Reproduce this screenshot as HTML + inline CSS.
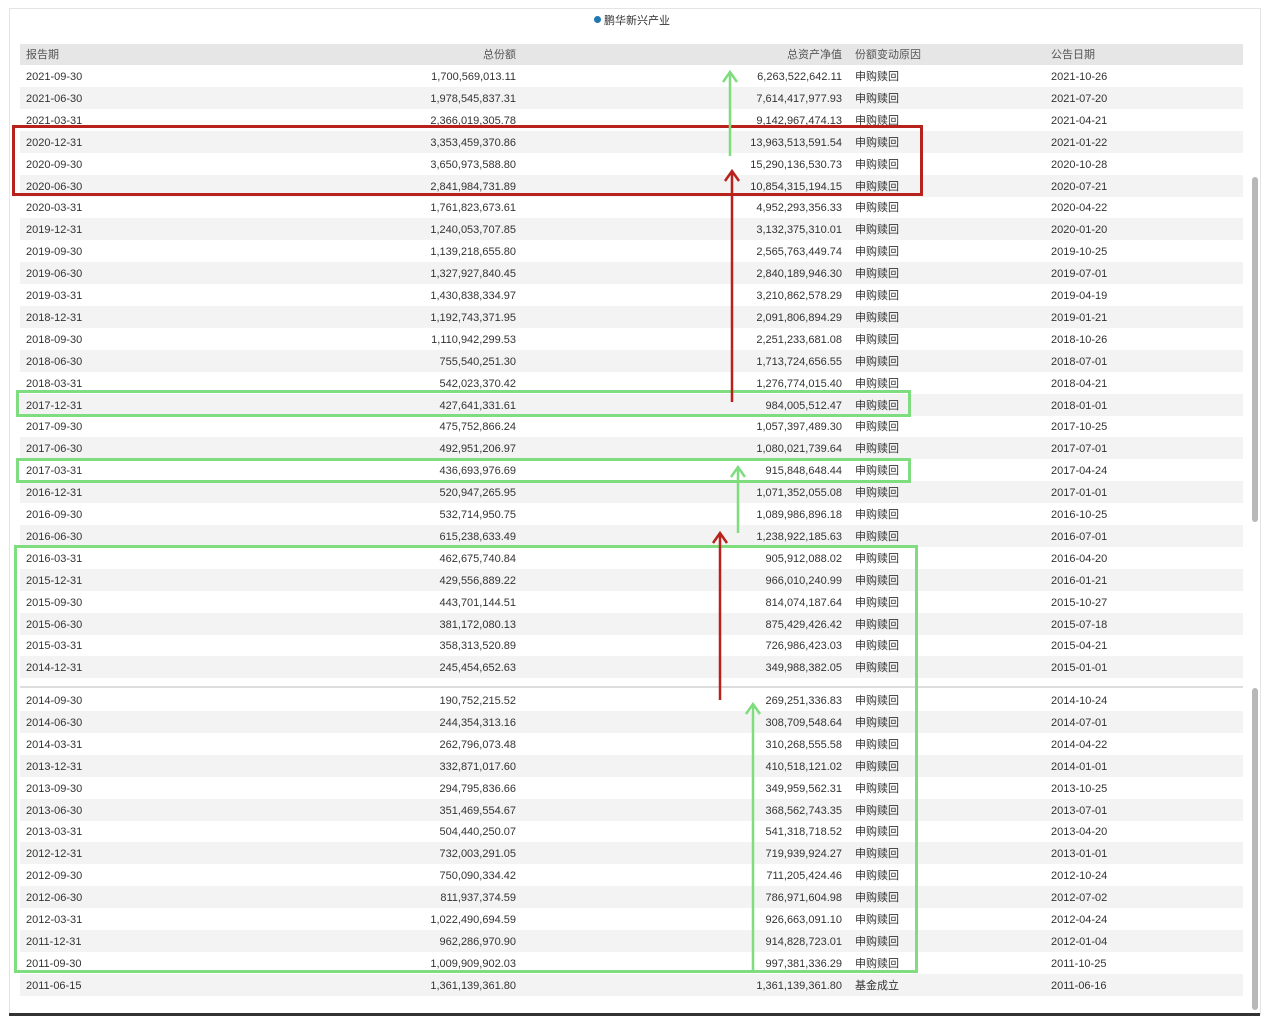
<!DOCTYPE html>
<html><head><meta charset="utf-8"><style>
body{margin:0;width:1267px;height:1025px;background:#fff;position:relative;overflow:hidden;font-family:"Liberation Sans","Noto Sans CJK SC",sans-serif;font-size:11px;color:#333}
.frame{position:absolute;left:9px;top:8px;width:1250px;height:1006px;border:1px solid #e4e4e4;border-bottom:none}
.bot{position:absolute;left:9px;top:1013px;width:1251px;height:3px;background:#333}
.row{position:absolute;left:20px;width:1223px;height:22px;line-height:24px}
.g{background:#f3f3f3}
.h{background:#e6e6e6;color:#555}
.row span{position:absolute;white-space:nowrap}
.c1{left:6px}.c2{right:727px}.c3{right:401px}.c4{left:835px}.c5{left:1031px}
.sb{position:absolute;left:1252px;width:6px;background:#b8b8b8;border-radius:3px}
</style></head><body>
<div class="frame"></div>
<div style="position:absolute;left:594px;top:14px;line-height:14px;font-size:11px;color:#333"><span style="display:inline-block;width:7px;height:7px;border-radius:50%;background:#1f77b4;margin-right:3px;vertical-align:1px"></span>鹏华新兴产业</div>
<div class="row h" style="top:44px;height:21px;line-height:22px"><span class="c1">报告期</span><span class="c2">总份额</span><span class="c3">总资产净值</span><span class="c4">份额变动原因</span><span class="c5">公告日期</span></div>
<div id="t"></div>
<div style="position:absolute;left:20px;top:678px;width:1223px;height:10px;background:#fff"></div>
<div style="position:absolute;left:20px;top:686px;width:1223px;height:2px;background:#ddd"></div>
<div class="sb" style="top:177px;height:345px"></div>
<div class="sb" style="top:688px;height:322px"></div>
<div class="bot"></div>
<svg width="1267" height="1025" style="position:absolute;left:0;top:0">
<g fill="none" stroke-width="3">
<rect x="13.5" y="126.5" width="908" height="68" stroke="#b8221c"/>
<rect x="17.5" y="391.5" width="892" height="24" stroke="#7fdc7f"/>
<rect x="17.5" y="459.5" width="892" height="22" stroke="#7fdc7f"/>
<rect x="15.5" y="546.5" width="901" height="425" stroke="#7fdc7f"/>
</g>
<g stroke-width="2.5" fill="none">
<path d="M730 156V72M723 82L730 72L737 82" stroke="#7fdc7f"/>
<path d="M732 402V171M725 181L732 171L739 181" stroke="#b8221c"/>
<path d="M738 533V467M731 477L738 467L745 477" stroke="#7fdc7f"/>
<path d="M720 700V533M713 543L720 533L727 543" stroke="#b8221c"/>
<path d="M753 972V704M746 714L753 704L760 714" stroke="#7fdc7f"/>
</g>
</svg>
<script>
var a=`2021-09-30|1,700,569,013.11|6,263,522,642.11|2021-10-26
2021-06-30|1,978,545,837.31|7,614,417,977.93|2021-07-20
2021-03-31|2,366,019,305.78|9,142,967,474.13|2021-04-21
2020-12-31|3,353,459,370.86|13,963,513,591.54|2021-01-22
2020-09-30|3,650,973,588.80|15,290,136,530.73|2020-10-28
2020-06-30|2,841,984,731.89|10,854,315,194.15|2020-07-21
2020-03-31|1,761,823,673.61|4,952,293,356.33|2020-04-22
2019-12-31|1,240,053,707.85|3,132,375,310.01|2020-01-20
2019-09-30|1,139,218,655.80|2,565,763,449.74|2019-10-25
2019-06-30|1,327,927,840.45|2,840,189,946.30|2019-07-01
2019-03-31|1,430,838,334.97|3,210,862,578.29|2019-04-19
2018-12-31|1,192,743,371.95|2,091,806,894.29|2019-01-21
2018-09-30|1,110,942,299.53|2,251,233,681.08|2018-10-26
2018-06-30|755,540,251.30|1,713,724,656.55|2018-07-01
2018-03-31|542,023,370.42|1,276,774,015.40|2018-04-21
2017-12-31|427,641,331.61|984,005,512.47|2018-01-01
2017-09-30|475,752,866.24|1,057,397,489.30|2017-10-25
2017-06-30|492,951,206.97|1,080,021,739.64|2017-07-01
2017-03-31|436,693,976.69|915,848,648.44|2017-04-24
2016-12-31|520,947,265.95|1,071,352,055.08|2017-01-01
2016-09-30|532,714,950.75|1,089,986,896.18|2016-10-25
2016-06-30|615,238,633.49|1,238,922,185.63|2016-07-01
2016-03-31|462,675,740.84|905,912,088.02|2016-04-20
2015-12-31|429,556,889.22|966,010,240.99|2016-01-21
2015-09-30|443,701,144.51|814,074,187.64|2015-10-27
2015-06-30|381,172,080.13|875,429,426.42|2015-07-18
2015-03-31|358,313,520.89|726,986,423.03|2015-04-21
2014-12-31|245,454,652.63|349,988,382.05|2015-01-01`.split('\n');
var b=`2014-09-30|190,752,215.52|269,251,336.83|2014-10-24
2014-06-30|244,354,313.16|308,709,548.64|2014-07-01
2014-03-31|262,796,073.48|310,268,555.58|2014-04-22
2013-12-31|332,871,017.60|410,518,121.02|2014-01-01
2013-09-30|294,795,836.66|349,959,562.31|2013-10-25
2013-06-30|351,469,554.67|368,562,743.35|2013-07-01
2013-03-31|504,440,250.07|541,318,718.52|2013-04-20
2012-12-31|732,003,291.05|719,939,924.27|2013-01-01
2012-09-30|750,090,334.42|711,205,424.46|2012-10-24
2012-06-30|811,937,374.59|786,971,604.98|2012-07-02
2012-03-31|1,022,490,694.59|926,663,091.10|2012-04-24
2011-12-31|962,286,970.90|914,828,723.01|2012-01-04
2011-09-30|1,009,909,902.03|997,381,336.29|2011-10-25
2011-06-15|1,361,139,361.80|1,361,139,361.80|2011-06-16`.split('\n');
var h='';
function add(list,top){list.forEach(function(l,i){var p=l.split('|');var r=(p[0]=='2011-06-15')?'基金成立':'申购赎回';
h+='<div class="row'+(i%2?' g':'')+'" style="top:'+(top+i*21.9).toFixed(1)+'px"><span class="c1">'+p[0]+'</span><span class="c2">'+p[1]+'</span><span class="c3">'+p[2]+'</span><span class="c4">'+r+'</span><span class="c5">'+p[3]+'</span></div>';});}
add(a,65);add(b,689);
document.getElementById('t').innerHTML=h;
</script>
</body></html>
